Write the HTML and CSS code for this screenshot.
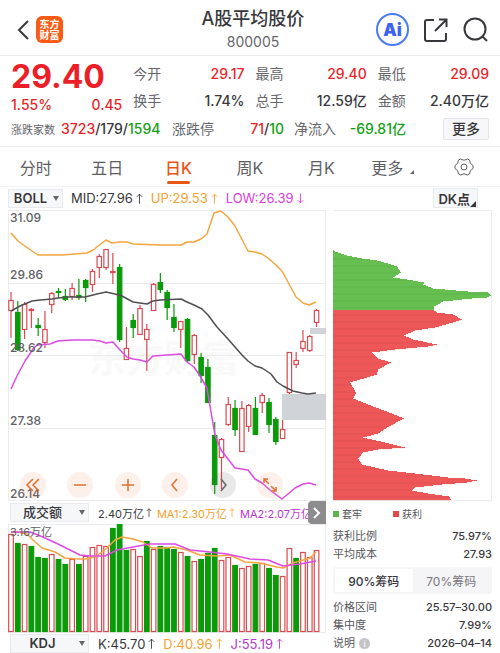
FILE: index.html
```
<!DOCTYPE html>
<html lang="zh-CN">
<head>
    <meta charset="UTF-8">
    <meta name="viewport" content="width=device-width, initial-scale=1.0">
    <title>A股平均股价 800005</title>
    <link rel="stylesheet" href="styles.css">
</head>
<body>

    <!-- Header -->
    <header class="header">
        <div class="header-left">
            <button class="icon-btn" aria-label="返回">
                <svg width="12" height="20" viewBox="0 0 12 20"><path d="M11 1 L2 10 L11 19" /></svg>
            </button>
            <div class="logo">东方<br>财富</div>
        </div>
        <div class="header-title">
            <h1>A股平均股价</h1>
            <p>800005</p>
        </div>
        <div class="header-right">
            <button class="ai-btn">Ai</button>
            <button class="icon-btn" aria-label="分享">
                <svg width="24" height="24" viewBox="0 0 24 24"><path d="M10 2 H3 Q1 2 1 4 V21 Q1 23 3 23 H20 Q22 23 22 21 V15 M11 13 L22 2 M15 1.5 H22.5 V9" /></svg>
            </button>
            <button class="icon-btn" aria-label="搜索">
                <svg width="26" height="26" viewBox="0 0 26 26"><circle cx="12" cy="12" r="10.5" /><path d="M19.5 19.5 L24 24" /></svg>
            </button>
        </div>
    </header>

    <!-- Quote -->
    <section class="quote">
        <div class="quote-grid">
            <div class="quote-main">
                <div class="price red">29.40</div>
                <div class="change red"><span>1.55%</span><span>0.45</span></div>
            </div>
            <div class="quote-col">
                <div class="pair"><span>今开</span><b class="red">29.17</b></div>
                <div class="pair"><span>换手</span><b>1.74%</b></div>
            </div>
            <div class="quote-col">
                <div class="pair"><span>最高</span><b class="red">29.40</b></div>
                <div class="pair"><span>总手</span><b>12.59亿</b></div>
            </div>
            <div class="quote-col">
                <div class="pair"><span>最低</span><b class="red">29.09</b></div>
                <div class="pair"><span>金额</span><b>2.40万亿</b></div>
            </div>
        </div>
        <div class="quote-extra">
            <div class="counts"><small>涨跌家数</small><b><i class="red">3723</i>/179/<i class="green">1594</i></b></div>
            <div class="pair limits"><span>涨跌停</span><b><i class="red">71</i>/<i class="green">10</i></b></div>
            <div class="pair flow"><span>净流入</span><b class="green">-69.81亿</b></div>
            <button class="more-btn">更多</button>
        </div>
    </section>

    <!-- Period tabs -->
    <nav class="tabs">
        <button>分时</button>
        <button>五日</button>
        <button class="active">日K</button>
        <button>周K</button>
        <button>月K</button>
        <button class="corner">更多</button>
        <button aria-label="设置">
            <svg width="20" height="20" viewBox="0 0 20 20"><path d="M6.5 2 Q10 4.5 13.5 2 L15.5 3 Q15.5 7 19 8.5 V11.5 Q15.5 13 15.5 17 L13.5 18 Q10 15.5 6.5 18 L4.5 17 Q4.5 13 1 11.5 V8.5 Q4.5 7 4.5 3 Z" /><circle cx="10" cy="10" r="3" /></svg>
        </button>
    </nav>

    <div class="indicator-row">
        <div class="select boll"><select aria-label="主图指标"><option>BOLL</option></select></div>
        <div class="values">
            <span>MID:27.96<svg class="arrow" viewBox="0 0 8 12"><path d="M4 12 V1 M1 4 L4 1 L7 4" /></svg></span>
            <span class="orange">UP:29.53<svg class="arrow" viewBox="0 0 8 12"><path d="M4 12 V1 M1 4 L4 1 L7 4" /></svg></span>
            <span class="pink">LOW:26.39<svg class="arrow" viewBox="0 0 8 12"><path d="M4 0 V11 M1 8 L4 11 L7 8" /></svg></span>
        </div>
        <button class="dk-btn">DK点</button>
    </div>

    <main class="board">
        <div class="charts">
            <div class="kline">
                <svg id="kline" viewBox="0 0 318 292"></svg>
                <div class="tools">
                    <button aria-label="最左"><svg viewBox="0 0 16 16"><path d="M8 2 L2 8 L8 14 M14 2 L8 8 L14 14" /></svg></button>
                    <button aria-label="缩小"><svg viewBox="0 0 16 16"><path d="M2 8 H14" /></svg></button>
                    <button aria-label="放大"><svg viewBox="0 0 16 16"><path d="M2 8 H14 M8 2 V14" /></svg></button>
                    <button aria-label="左移"><svg viewBox="0 0 16 16"><path d="M10 2 L5 8 L10 14" /></svg></button>
                    <button class="grey" aria-label="右移"><svg viewBox="0 0 16 16"><path d="M6 2 L11 8 L6 14" /></svg></button>
                    <button aria-label="全屏"><svg viewBox="0 0 16 16"><path d="M7 7 L2 2 M2 6 V2 H6 M9 9 L14 14 M14 10 V14 H10" /></svg></button>
                </div>
            </div>

            <div class="sub-row">
                <div class="select"><select aria-label="副图指标一"><option>成交额</option></select></div>
                <div class="values small">
                    <span>2.40万亿<svg class="arrow" viewBox="0 0 8 12"><path d="M4 12 V1 M1 4 L4 1 L7 4" /></svg></span>
                    <span class="orange">MA1:2.30万亿<svg class="arrow" viewBox="0 0 8 12"><path d="M4 12 V1 M1 4 L4 1 L7 4" /></svg></span>
                    <span class="purple">MA2:2.07万亿</span>
                </div>
                <button class="next-btn" aria-label="下一个"><svg width="8" height="12" viewBox="0 0 8 12"><path d="M1 1 L6 6 L1 11" /></svg></button>
            </div>

            <svg id="volume" viewBox="0 0 318 109"></svg>

            <div class="sub-row kdj">
                <div class="select"><select aria-label="副图指标二"><option>KDJ</option></select></div>
                <div class="values">
                    <span>K:45.70<svg class="arrow" viewBox="0 0 8 12"><path d="M4 12 V1 M1 4 L4 1 L7 4" /></svg></span>
                    <span class="orange">D:40.96<svg class="arrow" viewBox="0 0 8 12"><path d="M4 12 V1 M1 4 L4 1 L7 4" /></svg></span>
                    <span class="purple">J:55.19<svg class="arrow" viewBox="0 0 8 12"><path d="M4 12 V1 M1 4 L4 1 L7 4" /></svg></span>
                </div>
            </div>
        </div>

        <!-- Chip distribution -->
        <aside class="chips">
            <svg id="chips" viewBox="0 0 159 292"></svg>
            <div class="legend"><span class="trapped">套牢</span><span class="profit">获利</span></div>
            <div class="stat"><span>获利比例</span><b>75.97%</b></div>
            <div class="stat"><span>平均成本</span><b>27.93</b></div>
            <div class="segment">
                <button class="on">90%筹码</button>
                <button>70%筹码</button>
            </div>
            <div class="stat"><span>价格区间</span><b>25.57–30.00</b></div>
            <div class="stat"><span>集中度</span><b>7.99%</b></div>
            <div class="stat"><span>说明<em class="info">i</em></span><b>2026–04–14</b></div>
        </aside>
    </main>

    <script src="charts.js"></script>
</body>
</html>
```
FILE: styles.css
```
* {
    margin: 0;
    padding: 0;
    box-sizing: border-box;
}

body {
    font-family: Inter, "Noto Sans CJK SC", sans-serif;
    font-size: 14px;
    color: #38383c;
    background: #fff;
}

button, select {
    font: inherit;
    color: inherit;
    border: none;
    background: none;
    cursor: pointer;
}

svg {
    display: block;
    fill: none;
    stroke: currentColor;
}

b {
    font-weight: 500;
}

i {
    font-style: normal;
}

.red { color: #ec1f29; }
.green { color: #14a014; }
.orange { color: #f5a030; }
.pink { color: #dc3cdc; }
.purple { color: #b838cc; }

/* Header */
.header {
    display: grid;
    grid-template-columns: 1fr auto 1fr;
    align-items: center;
    height: 56px;
    padding: 4px 11px 0 17px;
    border-bottom: 1px solid #ececee;
}

.header-left, .header-right {
    display: flex;
    align-items: center;
    gap: 7px;
}

.header-right {
    justify-content: flex-end;
    gap: 15px;
}

.header-title {
    text-align: center;
}

.header h1 {
    font-size: 18px;
    font-weight: 500;
    line-height: 24px;
}

.header p {
    line-height: 22px;
    color: #66666a;
}

.icon-btn svg {
    stroke-width: 2;
}

.logo {
    width: 27px;
    height: 27px;
    padding-top: 3px;
    border-radius: 6px;
    background: #fb5a14;
    color: #fff;
    font-size: 10px;
    font-weight: 700;
    line-height: 11px;
    text-align: center;
}

.ai-btn {
    width: 33px;
    height: 33px;
    border: 2px solid #4a7af5;
    border-radius: 50%;
    color: #3b62f5;
    font-size: 17px;
    font-weight: 900;
    line-height: 28px;
}

/* Quote */
.quote {
    padding: 4px 11px 0;
    height: 91px;
    border-bottom: 1px solid #ececee;
}

.quote-grid {
    display: grid;
    grid-template-columns: repeat(4, minmax(0, 1fr));
    gap: 11px;
}

.price {
    font-size: 32px;
    font-weight: 700;
    line-height: 32px;
    padding-top: 1px;
}

.change {
    display: flex;
    justify-content: space-between;
    font-weight: 500;
    line-height: 20px;
    padding-top: 2px;
}

.pair {
    display: flex;
    justify-content: space-between;
    line-height: 27px;
    white-space: nowrap;
}

.pair span, .counts small {
    color: #66666a;
}

.quote-extra {
    display: flex;
    align-items: center;
    height: 27px;
    gap: 10px;
    white-space: nowrap;
}

.counts {
    width: 151px;
    font-size: 14px;
}

.counts small {
    font-size: 11px;
    margin-right: 6px;
}

.limits {
    width: 112px;
}

.flow {
    width: 112px;
}

.more-btn {
    margin-left: auto;
    width: 46px;
    height: 22px;
    border: 1px solid #e4e4e8;
    border-radius: 2px;
    background: #f7f7f9;
    font-weight: 500;
    line-height: 20px;
}

/* Tabs */
.tabs {
    display: grid;
    grid-template-columns: repeat(7, 1fr);
    height: 40px;
    border-bottom: 1px solid #f2f2f4;
}

.tabs button {
    display: flex;
    justify-content: center;
    align-items: center;
    position: relative;
    color: #606064;
    font-size: 16px;
}

.tabs .active {
    color: #ea5514;
    font-weight: 500;
}

.tabs .active::after {
    content: "";
    position: absolute;
    bottom: 2px;
    width: 23px;
    height: 3px;
    border-radius: 2px;
    background: #ea5514;
}

.corner::after, .dk-btn::after {
    content: "";
    align-self: flex-end;
    border: 3px solid transparent;
    border-right-color: currentColor;
    border-bottom-color: currentColor;
}

.tabs .corner::after {
    border-width: 2px;
    margin: 0 0 12px 7px;
}

/* Indicator rows */
.indicator-row {
    display: flex;
    align-items: center;
    height: 22px;
    padding: 0 22px 0 8px;
    gap: 8px;
}

.select {
    display: flex;
    align-items: center;
    position: relative;
    width: 79px;
    height: 19px;
    border: 1px solid #e8eaee;
    background: #f6f7f9;
}

.select select {
    appearance: none;
    width: 100%;
    padding-right: 14px;
    font-size: 13px;
    font-weight: 500;
    line-height: 17px;
    text-align: center;
    text-align-last: center;
}

.select::after {
    content: "";
    position: absolute;
    right: 3px;
    border: 3px solid transparent;
    border-top: 5px solid #66666a;
    border-bottom: none;
    pointer-events: none;
}

.boll {
    width: 55px;
}

.boll select {
    padding-right: 10px;
    font-weight: 600;
}

.kdj select {
    font-weight: 600;
}

.values {
    display: flex;
    gap: 8px;
    font-size: 13px;
    white-space: nowrap;
}

.values span {
    display: flex;
    align-items: center;
}

.arrow {
    width: 7px;
    height: 11px;
    margin-left: 3px;
}

.dk-btn {
    display: flex;
    align-items: center;
    margin-left: auto;
    height: 20px;
    padding: 0 1px 0 4px;
    border: 1px solid #e8eaee;
    background: #f6f7f9;
    font-size: 13px;
    font-weight: 600;
}

.sub-row {
    display: flex;
    align-items: center;
    position: relative;
    height: 23px;
    padding-left: 2px;
    gap: 9px;
    overflow: hidden;
}

.small {
    font-size: 11px;
    gap: 5px;
}

.small .arrow {
    width: 6px;
    height: 9px;
    margin-left: 2px;
}

.kdj {
    height: 21px;
}

.next-btn {
    display: flex;
    align-items: center;
    justify-content: center;
    position: absolute;
    right: 0;
    width: 18px;
    height: 23px;
    border-radius: 4px 0 0 4px;
    background: #8c8c8e;
    color: #fff;
}

.next-btn svg {
    stroke-width: 2;
}

/* Charts */
.board {
    display: grid;
    grid-template-columns: minmax(0, 2fr) minmax(0, 1fr);
    gap: 7px;
    padding: 0 8px;
}

#kline, #volume, #chips {
    width: 100%;
}

.kline {
    position: relative;
}

.grid { stroke: #ebebed; }
.axis { fill: #606064; stroke: none; font-size: 12px; font-weight: 500; }
.axis-small { font-size: 11px; font-weight: 400; }
.watermark { fill: #f9f9fa; stroke: none; font-size: 38px; font-weight: 700; }
.gap { fill: #d0d3d8; stroke: none; }
.up { fill: #fff; stroke: #da4a50; stroke-width: 1.2; }
.down { fill: #0a9a0a; stroke: #0a9a0a; stroke-width: 1.2; }
.line-up { stroke: #f5a540; stroke-width: 1.5; }
.line-mid { stroke: #505054; stroke-width: 1.5; }
.line-low { stroke: #dc4ce4; stroke-width: 1.5; }
.chip-green { fill: #66bf50; stroke: none; }
.chip-red { fill: #ee5758; stroke: none; }
.shade { fill: #000; fill-opacity: 0.03; stroke: none; }

.tools {
    display: flex;
    justify-content: space-between;
    position: absolute;
    left: 12px;
    right: 43px;
    bottom: 3px;
}

.tools button {
    width: 26px;
    height: 26px;
    padding: 5px;
    border-radius: 50%;
    background: rgba(240, 110, 50, 0.1);
    color: #e0702e;
}

.tools .grey {
    background: rgba(90, 90, 100, 0.14);
    color: #66666a;
}

.tools svg {
    stroke-width: 1.5;
}

/* Chip distribution */
.legend {
    display: flex;
    font-size: 10px;
    line-height: 26px;
    color: #55555a;
}

.legend span {
    display: flex;
    align-items: center;
    width: 60px;
}

.legend span::before {
    content: "";
    width: 6px;
    height: 6px;
    margin-right: 3px;
    background: #5cb846;
}

.legend .profit::before {
    background: #e8474a;
}

.stat {
    display: flex;
    justify-content: space-between;
    font-size: 11px;
    line-height: 18px;
}

.stat span {
    color: #55555a;
}

.segment {
    display: grid;
    grid-template-columns: 1fr 1fr;
    margin: 4px 0;
    padding: 2px;
    border-radius: 3px;
    background: #f5f5f8;
    font-size: 12px;
}

.segment button {
    height: 23px;
    color: #77777c;
}

.segment .on {
    background: #fff;
    color: #38383c;
    font-weight: 500;
}

.info {
    display: inline-block;
    width: 11px;
    height: 11px;
    margin-left: 4px;
    border-radius: 50%;
    background: #c4c4c8;
    color: #fff;
    font-size: 9px;
    font-style: normal;
    line-height: 11px;
    text-align: center;
}
```
FILE: charts.js
```
const STEP = 6.79;
const FIRST = 3;

// high, body top, body bottom, low, direction (1 = up, 0 = down)
const candles = [
    [83, 91, 102, 129, 1], [92, 103, 141, 142, 0], [93, 95, 121, 130, 1], [99, 100, 101, 119, 1],
    [109, 116, 119, 127, 0], [102, 120, 134, 139, 1], [83, 84, 96, 104, 1], [79, 82, 84, 89, 0],
    [80, 87, 91, 92, 0], [74, 79, 88, 91, 1], [70, 86, 89, 91, 0], [70, 71, 79, 93, 0],
    [60, 62, 76, 83, 1], [45, 47, 59, 69, 1], [40, 40, 59, 61, 1], [44, 62, 64, 75, 1],
    [55, 58, 131, 133, 0], [118, 139, 151, 151, 1], [105, 111, 119, 129, 0], [96, 99, 126, 126, 1],
    [115, 120, 131, 162, 1], [74, 75, 102, 102, 1], [64, 73, 81, 84, 0], [81, 83, 99, 111, 0],
    [95, 108, 119, 123, 0], [112, 112, 121, 139, 1], [109, 110, 152, 153, 0], [125, 126, 146, 155, 1],
    [144, 148, 167, 174, 0], [150, 158, 194, 194, 0], [213, 226, 276, 285, 0], [229, 230, 249, 280, 1],
    [188, 195, 216, 217, 1], [191, 199, 221, 227, 0], [192, 199, 243, 243, 1], [195, 196, 218, 223, 1],
    [188, 199, 226, 226, 0], [184, 186, 194, 204, 1], [189, 193, 216, 224, 0], [208, 210, 233, 236, 0],
    [211, 220, 230, 230, 1], [143, 143, 184, 185, 1], [143, 151, 156, 159, 1], [121, 132, 140, 143, 1],
    [126, 127, 142, 143, 1], [100, 101, 114, 118, 1]
];

const upper = "3,24 10,32 24,42 30,46 54,46 67,45 79,44 85,41 98,31 104,34 112,33 119,33 125,35 152,36 173,36 179,33 186,33 193,30 199,25 206,4 213,2 220,8 227,17 240,42 247,43 254,45 260,49 268,56 274,62 281,75 288,88 295,94 301,96 308,93";
const middle = "3,102 12,97 24,92 32,91 44,90 50,89 60,88 77,88 89,85 98,83 107,85 114,87 125,93 132,94 139,95 145,92 152,91 173,90 179,93 186,96 194,100 200,106 209,118 220,130 234,146 240,152 247,157 254,159 263,165 269,173 275,177 285,182 294,184 300,185 308,184";
const lower = "3,180 9,167 17,152 25,140 29,136 42,135 50,132 64,131 84,131 92,132 98,134 105,133 112,141 119,148 125,150 132,151 139,153 145,147 159,146 173,145 179,153 186,158 192,167 199,179 203,203 207,226 213,241 220,250 227,259 240,261 247,270 254,274 262,281 274,290 280,285 287,279 295,275 301,274 308,276";

// bar top and direction
const volumes = [
    [10, 1], [19, 0], [20, 1], [22, 0], [33, 0], [34, 0], [30, 1], [35, 0], [40, 0], [35, 1], [40, 0], [32, 1],
    [23, 1], [21, 1], [22, 1], [4, 0], [0, 0], [26, 0], [25, 1], [32, 1], [17, 0], [25, 1], [22, 0], [23, 0],
    [25, 0], [28, 1], [32, 0], [37, 1], [35, 0], [29, 0], [24, 0], [36, 1], [33, 1], [41, 0], [44, 1], [42, 1],
    [40, 0], [39, 1], [44, 0], [51, 0], [52, 1], [24, 1], [34, 0], [28, 1], [33, 1], [26, 1]
];
const ma1 = "3,8 9,8 19,10 25,16 34,24 47,28 57,34 69,35 79,35 89,32 99,24 107,16 114,13 125,15 135,18 144,24 159,24 165,23 179,26 192,31 209,32 222,31 237,38 252,39 269,43 275,44 285,39 302,34 308,28";
const ma2 = "3,8 9,8 22,8 35,13 50,20 72,31 82,32 97,32 109,26 125,23 142,20 159,20 167,20 182,26 202,28 219,30 242,35 260,36 275,42 292,40 308,37";

// chip profile: width, y
const profile = [
    [0, 40], [2, 42], [14, 46], [29, 49], [44, 51], [55, 54], [64, 57], [68, 63], [60, 68], [74, 70], [91, 73],
    [90, 75], [100, 79], [135, 82], [155, 83], [158, 86], [154, 88], [139, 89], [110, 92], [105, 95], [101, 97],
    [101, 101], [104, 103], [120, 105], [129, 110], [120, 113], [102, 118], [82, 121], [71, 126], [80, 130],
    [104, 135], [95, 137], [62, 140], [39, 143], [45, 149], [58, 153], [45, 160], [44, 165], [17, 173], [23, 183],
    [20, 189], [35, 195], [59, 204], [71, 209], [54, 218], [45, 224], [30, 228], [52, 233], [72, 238], [45, 240],
    [30, 243], [25, 249], [29, 255], [55, 261], [82, 264], [115, 268], [132, 269], [144, 271], [134, 273],
    [109, 275], [82, 278], [79, 281], [95, 284], [116, 287], [118, 291]
];
const COST_LINE = 101;

function rect(x, y, w, h, cls) {
    return `<rect x="${x}" y="${y}" width="${w}" height="${h}" class="${cls}"/>`;
}

function line(points, cls) {
    return `<polyline points="${points}" class="${cls}" stroke-linejoin="round"/>`;
}

function drawKline() {
    let out = '<text x="80" y="163" class="watermark">东方财富</text>';
    out += '<path class="grid" d="M0 1.5 H318 M0 74.5 H318 M0 146.5 H318 M0 219.5 H318 M0 291.5 H318 M0.5 1 V292 M317.5 1 V292"/>';
    out += rect(302, 119, 16, 6, 'gap') + rect(274, 185, 44, 26, 'gap');
    candles.forEach(([high, top, bottom, low, up], i) => {
        const x = FIRST + i * STEP;
        const cls = up ? 'up' : 'down';
        out += `<path d="M${x} ${high} V${low}" class="${cls}"/>`;
        out += rect(x - 2.2, top + 0.5, 4.4, Math.max(bottom - top - 1, 1), cls);
    });
    out += line(upper, 'line-up') + line(middle, 'line-mid') + line(lower, 'line-low');
    [['31.09', 13], ['29.86', 70], ['28.62', 143], ['27.38', 216], ['26.14', 289]].forEach(([t, y]) => {
        out += `<text x="2" y="${y}" class="axis">${t}</text>`;
    });
    document.getElementById('kline').innerHTML = out;
}

function drawVolume() {
    let out = '<path class="grid" d="M0 0.5 H318 M0 108.5 H318 M0.5 0 V109 M317.5 0 V109"/>';
    volumes.forEach(([top, up], i) => {
        const x = FIRST + i * STEP;
        out += rect(x - 2.3, top + 0.5, 4.6, 107 - top, up ? 'up' : 'down');
    });
    out += line(ma1, 'line-up') + line(ma2, 'line-low');
    out += '<text x="2" y="12" class="axis axis-small">3.16万亿</text>';
    document.getElementById('volume').innerHTML = out;
}

function drawChips() {
    let out = '<path class="grid" d="M0 1.5 H158.5 V291.5 H0"/>';
    let k = 0;
    for (let y = 40; y < 291; y++) {
        while (profile[k + 1][1] < y) k++;
        const [w0, y0] = profile[k];
        const [w1, y1] = profile[k + 1];
        const w = Math.round(w0 + (w1 - w0) * (y - y0) / (y1 - y0));
        out += rect(0, y, w, 1.1, y < COST_LINE ? 'chip-green' : 'chip-red');
        if (y % 7 < 2) out += rect(0, y, w, 1, 'shade');
    }
    document.getElementById('chips').innerHTML = out;
}

drawKline();
drawVolume();
drawChips();
```
